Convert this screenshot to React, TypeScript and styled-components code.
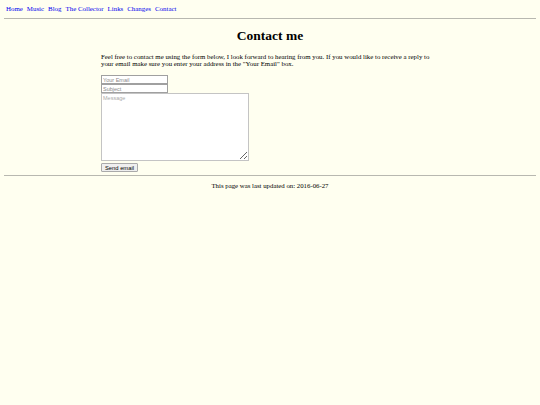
import React from "react";
import styled, { createGlobalStyle } from "styled-components";

const GlobalStyle = createGlobalStyle`
  html, body {
    margin: 0;
    padding: 0;
    background: #fffff0;
  }
  body {
    padding: 0 4px;
    font-family: "Liberation Serif", "Times New Roman", serif;
    color: #000;
  }
`;

const Nav = styled.nav`
  display: flex;
  gap: 4px;
  padding: 5px 2px 0;
  height: 13px;
  font-size: 6.9px;
  line-height: 8px;
`;

const NavLink = styled.a`
  color: #0000ee;
  text-decoration: none;
`;

const Rule = styled.hr`
  margin: 0;
  border: 0;
  border-top: 1px solid #b8b8b0;
`;

const Main = styled.main`
  width: 338px;
  margin: 0 auto;
  padding-top: 9px;
`;

const Title = styled.h1`
  margin: 0 0 9px;
  text-align: center;
  font-size: 13.5px;
  line-height: 16px;
  font-weight: bold;
`;

const Intro = styled.p`
  margin: 0 0 8px;
  font-size: 6.85px;
  line-height: 7px;
`;

const Form = styled.form`
  display: flex;
  flex-direction: column;
  align-items: flex-start;
  padding-bottom: 3px;
`;

const Field = styled.input`
  box-sizing: border-box;
  width: 67px;
  height: 9px;
  margin: 0;
  padding: 0 1px;
  border: 1px solid #a0a0a0;
  background: #fff;
  font-family: "Liberation Sans", Arial, sans-serif;
  font-size: 5.5px;
  &::placeholder {
    color: #8a8a8a;
  }
`;

const Message = styled.textarea`
  display: block;
  box-sizing: border-box;
  width: 148px;
  height: 68px;
  margin: 0;
  padding: 1px;
  border: 1px solid #c4c4c4;
  background: #fff;
  font-family: "Liberation Sans", Arial, sans-serif;
  font-size: 5.5px;
  resize: both;
  &::placeholder {
    color: #aaa;
  }
`;

const SendButton = styled.button`
  margin-top: 2px;
  box-sizing: border-box;
  height: 9px;
  padding: 0 3px;
  border: 1px solid #aaa;
  border-radius: 1px;
  background: #efefef;
  font-family: "Liberation Sans", Arial, sans-serif;
  font-size: 5.8px;
  line-height: 6px;
  color: #000;
`;

const Footer = styled.footer`
  padding-top: 6px;
  text-align: center;
  font-size: 6.8px;
  line-height: 8px;
`;

const links = ["Home", "Music", "Blog", "The Collector", "Links", "Changes", "Contact"];

export default function App() {
  return (
    <>
      <GlobalStyle />
      <Nav>
        {links.map((l) => (
          <NavLink key={l} href="#">
            {l}
          </NavLink>
        ))}
      </Nav>
      <Rule />
      <Main>
        <Title>Contact me</Title>
        <Intro>
          Feel free to contact me using the form below, I look forward to hearing from you. If you
          would like to receive a reply to your email make sure you enter your address in the
          "Your Email" box.
        </Intro>
        <Form onSubmit={(e) => e.preventDefault()}>
          <Field type="email" placeholder="Your Email" />
          <Field type="text" placeholder="Subject" />
          <Message placeholder="Message" />
          <SendButton type="submit">Send email</SendButton>
        </Form>
      </Main>
      <Rule />
      <Footer>This page was last updated on: 2016-06-27</Footer>
    </>
  );
}
